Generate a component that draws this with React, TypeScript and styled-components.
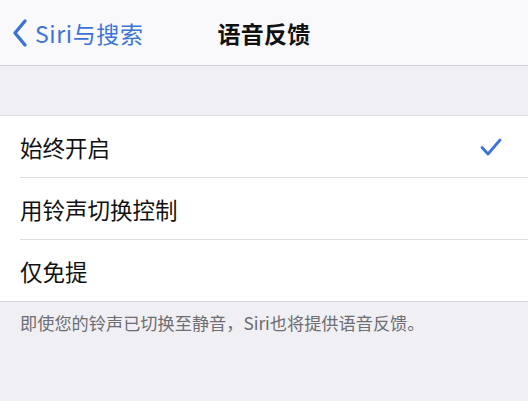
import React from "react";
import styled, { createGlobalStyle } from "styled-components";

const Global = createGlobalStyle`
  html, body { margin: 0; padding: 0; background: #f0eff4; }
  body { font-family: "PingFang SC", "Noto Sans CJK SC", "Liberation Sans", sans-serif; }
  #root { min-height: 401px; }
`;

const Page = styled.div`
  width: 528px;
  height: 401px;
  background: #f0eff4;
  display: flex;
  flex-direction: column;
  overflow: hidden;
`;

const NavBar = styled.div`
  height: 65px;
  background: #f9f9fb;
  border-bottom: 1px solid #d4d4d8;
  display: grid;
  grid-template-columns: 1fr auto 1fr;
  align-items: center;
  flex-shrink: 0;
`;

const Back = styled.div`
  display: flex;
  align-items: center;
  gap: 6px;
  padding-left: 11px;
  color: #3b74d6;
  font-size: 23px;
  letter-spacing: 0.6px;
`;

const Title = styled.div`
  font-size: 23px;
  font-weight: 700;
  color: #111;
  letter-spacing: 0.3px;
`;

const Spacer = styled.div`
  height: 49px;
  flex-shrink: 0;
`;

const List = styled.div`
  background: #fff;
  border-top: 1px solid #dcdce0;
  border-bottom: 1px solid #d4d4d8;
  padding-left: 20px;
`;

const Row = styled.div<{ $last?: boolean }>`
  height: 61px;
  display: flex;
  align-items: center;
  justify-content: space-between;
  padding-right: 26px;
  border-bottom: ${(p) => (p.$last ? "none" : "1px solid #e0e0e4")};
  font-size: 22.5px;
  color: #111;
`;

const Footer = styled.div`
  padding: 8px 20px 0 20px;
  font-size: 17.2px;
  color: #6d6d72;
`;

const Chevron = () => (
  <svg width="18" height="30" viewBox="0 0 18 30">
    <path d="M14 3 L4 15 L14 27" fill="none" stroke="#3b74d6" strokeWidth="3.4" strokeLinecap="round" strokeLinejoin="round" />
  </svg>
);

const Check = () => (
  <svg width="22" height="20" viewBox="0 0 22 20">
    <path d="M2 10.5 L8 17 L20 3" fill="none" stroke="#3b74d6" strokeWidth="2.8" strokeLinecap="round" strokeLinejoin="round" />
  </svg>
);

const options = ["始终开启", "用铃声切换控制", "仅免提"];

export default function App() {
  return (
    <>
      <Global />
      <Page>
        <NavBar>
          <Back>
            <Chevron />
            <span>Siri与搜索</span>
          </Back>
          <Title>语音反馈</Title>
          <div />
        </NavBar>
        <Spacer />
        <List>
          {options.map((o, i) => (
            <Row key={o} $last={i === options.length - 1}>
              <span>{o}</span>
              {i === 0 && <Check />}
            </Row>
          ))}
        </List>
        <Footer>即使您的铃声已切换至静音，Siri也将提供语音反馈。</Footer>
      </Page>
    </>
  );
}
